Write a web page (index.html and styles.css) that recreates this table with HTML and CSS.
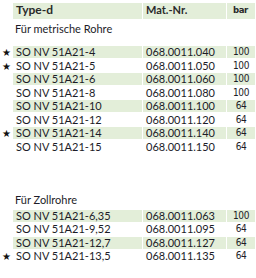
FILE: index.html
```html
<!DOCTYPE html>
<html lang="de">
<head>
<meta charset="utf-8">
<link rel="stylesheet" href="styles.css">
</head>
<body>
<div class="sheet">
  <div class="row head">
    <span class="star"></span>
    <span class="cell type">Type-d</span>
    <span class="cell mat">Mat.-Nr.</span>
    <span class="cell bar">bar</span>
  </div>
  <div class="section">Für metrische Rohre</div>
  <div class="group">
    <div class="row alt"><span class="star">★</span><span class="cell type">SO NV 51A21-4</span><span class="cell mat">068.0011.040</span><span class="cell bar">100</span></div>
    <div class="row"><span class="star">★</span><span class="cell type">SO NV 51A21-5</span><span class="cell mat">068.0011.050</span><span class="cell bar">100</span></div>
    <div class="row alt"><span class="star"></span><span class="cell type">SO NV 51A21-6</span><span class="cell mat">068.0011.060</span><span class="cell bar">100</span></div>
    <div class="row"><span class="star"></span><span class="cell type">SO NV 51A21-8</span><span class="cell mat">068.0011.080</span><span class="cell bar">100</span></div>
    <div class="row alt"><span class="star"></span><span class="cell type">SO NV 51A21-10</span><span class="cell mat">068.0011.100</span><span class="cell bar">64</span></div>
    <div class="row"><span class="star"></span><span class="cell type">SO NV 51A21-12</span><span class="cell mat">068.0011.120</span><span class="cell bar">64</span></div>
    <div class="row alt"><span class="star">★</span><span class="cell type">SO NV 51A21-14</span><span class="cell mat">068.0011.140</span><span class="cell bar">64</span></div>
    <div class="row"><span class="star"></span><span class="cell type">SO NV 51A21-15</span><span class="cell mat">068.0011.150</span><span class="cell bar">64</span></div>
  </div>
  <div class="section zoll">Für Zollrohre</div>
  <div class="group">
    <div class="row alt"><span class="star"></span><span class="cell type">SO NV 51A21-6,35</span><span class="cell mat">068.0011.063</span><span class="cell bar">100</span></div>
    <div class="row"><span class="star"></span><span class="cell type">SO NV 51A21-9,52</span><span class="cell mat">068.0011.095</span><span class="cell bar">64</span></div>
    <div class="row alt"><span class="star"></span><span class="cell type">SO NV 51A21-12,7</span><span class="cell mat">068.0011.127</span><span class="cell bar">64</span></div>
    <div class="row"><span class="star">★</span><span class="cell type">SO NV 51A21-13,5</span><span class="cell mat">068.0011.135</span><span class="cell bar">64</span></div>
  </div>
</div>
</body>
</html>
```
FILE: styles.css
```css
html, body {
  margin: 0;
  padding: 0;
  background: #ffffff;
}
.sheet {
  width: 256px;
  padding-top: 3px;
  font-family: "Lato", "Liberation Sans", sans-serif;
  color: #1c1c28;
  font-size: 11px;
}
.row {
  display: grid;
  grid-template-columns: 12px 129px 83px 28px;
  column-gap: 1px;
  height: 12px;
  line-height: 12px;
  margin-bottom: 1.5px;
}
.row.alt .cell,
.row.head .cell {
  background: #e3eed9;
}
.row.head {
  height: 16px;
  line-height: 14px;
  margin-bottom: 0;
}
.head .cell {
  font-weight: bold;
  color: #2a2a2a;
}
.head .type {
  font-size: 12px;
}
.head .bar {
  font-size: 9.5px;
  text-align: left;
  padding-left: 6px;
}
.star {
  font-size: 10px;
  text-align: center;
  color: #111;
}
.cell {
  padding-left: 3px;
  white-space: nowrap;
  overflow: hidden;
}
.bar {
  padding-left: 0;
  text-align: center;
  font-family: "DejaVu Sans Condensed", "DejaVu Sans", sans-serif;
  font-stretch: condensed;
  font-size: 10px;
  letter-spacing: -0.4px;
}
.section {
  padding-left: 15px;
  height: 12px;
  line-height: 12px;
  margin-top: 4px;
  margin-bottom: 11px;
}
.section.zoll {
  margin-top: 41px;
  margin-bottom: 4px;
}
```
